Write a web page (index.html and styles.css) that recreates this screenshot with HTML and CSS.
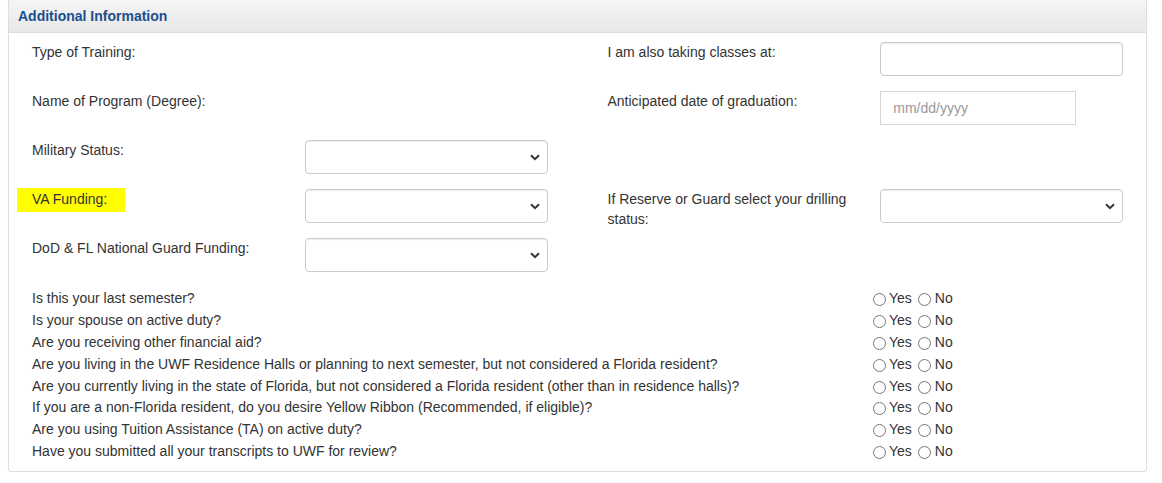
FILE: index.html
```html
<!DOCTYPE html>
<html lang="en">
<head>
<meta charset="utf-8">
<title>Additional Information</title>
<link rel="stylesheet" href="styles.css">
</head>
<body>
<div class="panel">
  <div class="panel-heading"><h3 class="panel-title">Additional Information</h3></div>
  <div class="panel-body">
    <div class="grid">
      <div class="half">
        <label class="cell lbl">Type of Training:</label>
        <div class="cell"></div>
      </div>
      <div class="half">
        <label class="cell lbl">I am also taking classes at:</label>
        <div class="cell"><input class="ctl" type="text"></div>
      </div>

      <div class="half">
        <label class="cell lbl">Name of Program (Degree):</label>
        <div class="cell"></div>
      </div>
      <div class="half">
        <label class="cell lbl">Anticipated date of graduation:</label>
        <div class="cell"><input class="ctl date" type="text" placeholder="mm/dd/yyyy"></div>
      </div>

      <div class="half">
        <label class="cell lbl">Military Status:</label>
        <div class="cell"><div class="sel"><select class="ctl"><option></option></select><svg class="chev" width="10" height="7" viewBox="0 0 10 7"><path d="M1 1.2 L5 5.2 L9 1.2" fill="none" stroke="#333" stroke-width="2"/></svg></div></div>
      </div>
      <div class="half empty"></div>

      <div class="half">
        <label class="cell lbl"><span class="hl">VA Funding:</span></label>
        <div class="cell"><div class="sel"><select class="ctl"><option></option></select><svg class="chev" width="10" height="7" viewBox="0 0 10 7"><path d="M1 1.2 L5 5.2 L9 1.2" fill="none" stroke="#333" stroke-width="2"/></svg></div></div>
      </div>
      <div class="half">
        <label class="cell lbl">If Reserve or Guard select your drilling status:</label>
        <div class="cell"><div class="sel"><select class="ctl"><option></option></select><svg class="chev" width="10" height="7" viewBox="0 0 10 7"><path d="M1 1.2 L5 5.2 L9 1.2" fill="none" stroke="#333" stroke-width="2"/></svg></div></div>
      </div>

      <div class="half">
        <label class="cell lbl">DoD &amp; FL National Guard Funding:</label>
        <div class="cell"><div class="sel"><select class="ctl"><option></option></select><svg class="chev" width="10" height="7" viewBox="0 0 10 7"><path d="M1 1.2 L5 5.2 L9 1.2" fill="none" stroke="#333" stroke-width="2"/></svg></div></div>
      </div>
      <div class="half empty"></div>
    </div>

    <div class="questions">
      <div class="q"><span class="qt">Is this your last semester?</span><span class="yn"><label><input type="radio" name="q1">Yes</label><label><input type="radio" name="q1">No</label></span></div>
      <div class="q"><span class="qt">Is your spouse on active duty?</span><span class="yn"><label><input type="radio" name="q2">Yes</label><label><input type="radio" name="q2">No</label></span></div>
      <div class="q"><span class="qt">Are you receiving other financial aid?</span><span class="yn"><label><input type="radio" name="q3">Yes</label><label><input type="radio" name="q3">No</label></span></div>
      <div class="q"><span class="qt">Are you living in the UWF Residence Halls or planning to next semester, but not considered a Florida resident?</span><span class="yn"><label><input type="radio" name="q4">Yes</label><label><input type="radio" name="q4">No</label></span></div>
      <div class="q"><span class="qt">Are you currently living in the state of Florida, but not considered a Florida resident (other than in residence halls)?</span><span class="yn"><label><input type="radio" name="q5">Yes</label><label><input type="radio" name="q5">No</label></span></div>
      <div class="q"><span class="qt">If you are a non-Florida resident, do you desire Yellow Ribbon (Recommended, if eligible)?</span><span class="yn"><label><input type="radio" name="q6">Yes</label><label><input type="radio" name="q6">No</label></span></div>
      <div class="q"><span class="qt">Are you using Tuition Assistance (TA) on active duty?</span><span class="yn"><label><input type="radio" name="q7">Yes</label><label><input type="radio" name="q7">No</label></span></div>
      <div class="q"><span class="qt">Have you submitted all your transcripts to UWF for review?</span><span class="yn"><label><input type="radio" name="q8">Yes</label><label><input type="radio" name="q8">No</label></span></div>
    </div>
  </div>
</div>
</body>
</html>
```

FILE: styles.css
```css
* { box-sizing: border-box; }
html, body {
  margin: 0;
  padding: 0;
  background: #fff;
}
body {
  font-family: "Liberation Sans", Arial, sans-serif;
  font-size: 14px;
  line-height: 20px;
  color: #333;
  padding: 0 15px 0 8px;
}
.panel {
  border: 1px solid #ddd;
  border-top: none;
  border-radius: 0 0 4px 4px;
  box-shadow: 0 1px 1px rgba(0,0,0,0.05);
  background: #fff;
}
.panel-heading {
  height: 33px;
  padding: 0 9px;
  background: linear-gradient(to bottom, #f5f5f5 0%, #e8e8e8 100%);
  border-bottom: 1px solid #ddd;
  display: flex;
  align-items: center;
}
.panel-title {
  margin: 0;
  font-size: 14px;
  font-weight: bold;
  color: #1b4e8e;
  line-height: 20px;
}
.panel-body {
  padding: 9px 8px 8px 8px;
}
.grid {
  display: grid;
  grid-template-columns: 1fr 1fr;
  column-gap: 30px;
}
.half {
  display: grid;
  grid-template-columns: 1fr 1fr;
  height: 34px;
  margin-bottom: 15px;
}
.cell {
  padding: 0 15px;
  display: block;
}
.lbl {
  font-weight: normal;
  padding-top: 0;
}
.hl {
  background: #ffff00;
  padding: 3px 18px 4px 15px;
  margin-left: -15px;
  display: inline-block;
  line-height: 17px;
  position: relative;
  top: -1px;
}
.ctl {
  display: block;
  width: 100%;
  height: 34px;
  border: 1px solid #ccc;
  border-radius: 4px;
  background: #fff;
  box-shadow: inset 0 1px 1px rgba(0,0,0,0.075);
  font-family: inherit;
  font-size: 14px;
  color: #555;
  padding: 6px 12px;
}
.date {
  width: 196px;
  border-radius: 0;
  border-color: #d6d6d6;
  box-shadow: none;
}
.date::placeholder { color: #999; }
.sel { position: relative; }
select.ctl {
  -webkit-appearance: none;
  appearance: none;
}
.chev {
  position: absolute;
  right: 8px;
  top: 14px;
  pointer-events: none;
}
.questions {
  padding: 1px 0 0 15px;
}
.q {
  display: flex;
  line-height: 21.9px;
  height: 21.9px;
}
.qt { flex: 1; }
.yn {
  width: 265px;
  display: flex;
  align-items: center;
}
.yn label {
  display: flex;
  align-items: center;
  margin-right: 6px;
}
.yn input[type=radio] {
  -webkit-appearance: none;
  appearance: none;
  width: 13px;
  height: 13px;
  margin: 1px 3px 0 0;
  border: 1px solid #767676;
  border-radius: 50%;
  background: #fff;
}
.yn label + label input[type=radio] { margin-right: 4px; }
```
